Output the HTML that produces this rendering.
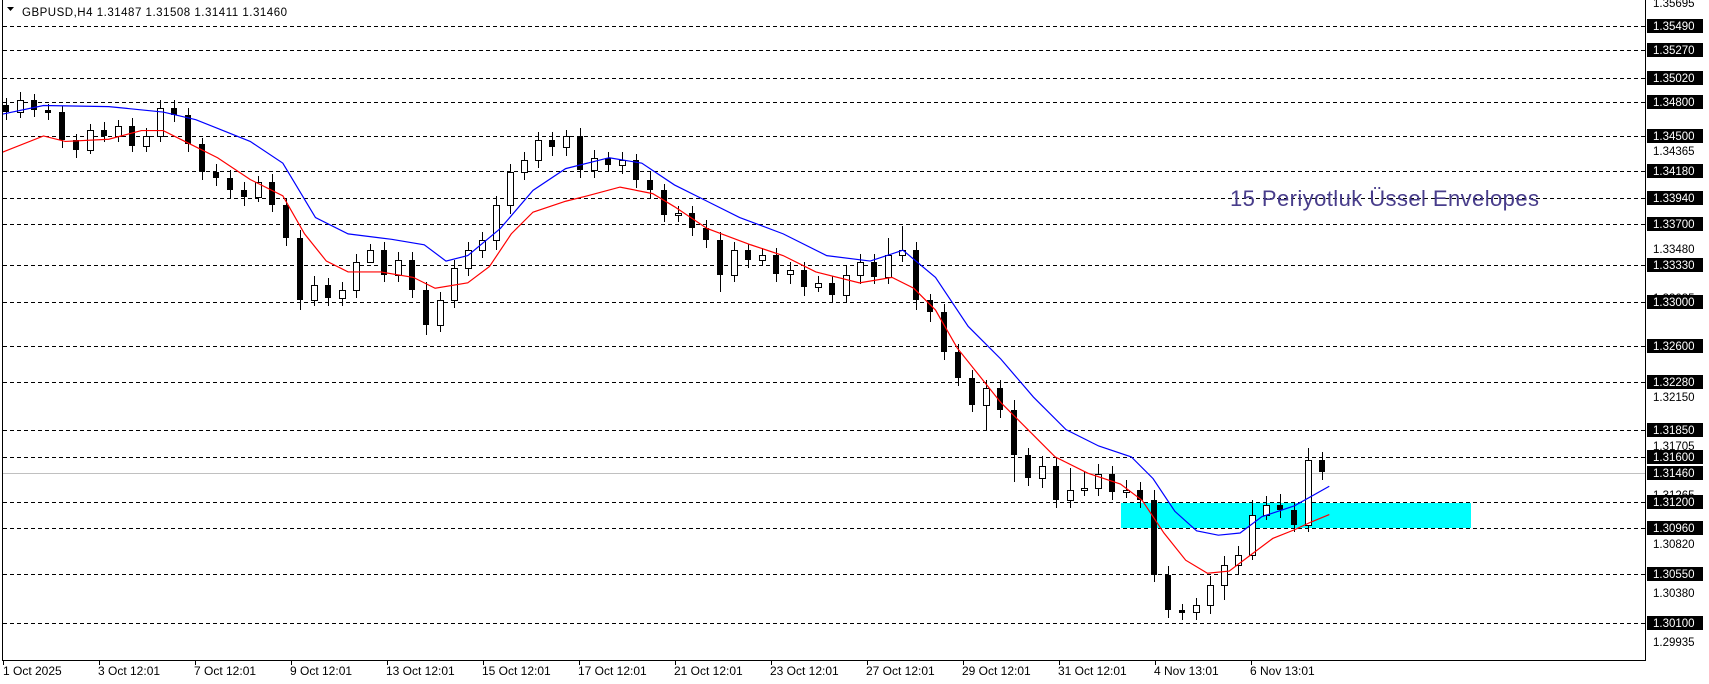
<!DOCTYPE html>
<html><head><meta charset="utf-8"><style>
html,body{margin:0;padding:0;background:#fff;width:1709px;height:684px;overflow:hidden}
svg{display:block}
text{font-family:"Liberation Sans",sans-serif;font-size:11.5px}
.b{fill:#000}
.w{fill:#fff;stroke:#000;stroke-width:1}
.g line{stroke:#000;stroke-dasharray:4,3}
.L rect{fill:#000}
.L text{fill:#fff}
.d text{font-size:12px}
</style></head><body>
<svg width="1709" height="684" viewBox="0 0 1709 684" xmlns="http://www.w3.org/2000/svg">
<rect width="1709" height="684" fill="#fff"/>
<g class="g">
<line x1="3" y1="26.5" x2="1645" y2="26.5"/>
<line x1="3" y1="50.5" x2="1645" y2="50.5"/>
<line x1="3" y1="78.5" x2="1645" y2="78.5"/>
<line x1="3" y1="102.5" x2="1645" y2="102.5"/>
<line x1="3" y1="136.5" x2="1645" y2="136.5"/>
<line x1="3" y1="171.5" x2="1645" y2="171.5"/>
<line x1="3" y1="198.5" x2="1645" y2="198.5"/>
<line x1="3" y1="224.5" x2="1645" y2="224.5"/>
<line x1="3" y1="265.5" x2="1645" y2="265.5"/>
<line x1="3" y1="302.5" x2="1645" y2="302.5"/>
<line x1="3" y1="346.5" x2="1645" y2="346.5"/>
<line x1="3" y1="382.5" x2="1645" y2="382.5"/>
<line x1="3" y1="430.5" x2="1645" y2="430.5"/>
<line x1="3" y1="457.5" x2="1645" y2="457.5"/>
<line x1="3" y1="502.5" x2="1645" y2="502.5"/>
<line x1="3" y1="528.5" x2="1645" y2="528.5"/>
<line x1="3" y1="574.5" x2="1645" y2="574.5"/>
<line x1="3" y1="623.5" x2="1645" y2="623.5"/>
</g>
<line x1="3" y1="473.5" x2="1645" y2="473.5" stroke="#c0c0c0"/>
<rect x="1121" y="503" width="350" height="25" fill="#00ffff"/>
<text x="1230" y="206" style="font-size:22px" fill="#483d8b" textLength="309">15 Periyotluk Üssel Envelopes</text>

<path stroke="#000" fill="none" d="M6.5 98V120 M20.5 92V118 M34.5 94V117 M48.5 104V120 M62.5 106V148 M76.5 134V158 M90.5 124V154 M104.5 122V142 M118.5 120V142 M132.5 118V152 M146.5 128V152 M160.5 100V142 M174.5 100V122 M188.5 108V152 M202.5 138V180 M216.5 164V186 M230.5 170V198 M244.5 182V206 M258.5 176V202 M272.5 174V212 M286.5 198V246 M300.5 230V310 M314.5 276V306 M328.5 278V306 M342.5 282V306 M356.5 254V298 M370.5 244V262 M384.5 242V282 M398.5 252V282 M412.5 252V298 M426.5 282V335 M440.5 292V332 M454.5 260V308 M468.5 242V276 M482.5 232V258 M496.5 196V250 M510.5 164V214 M524.5 152V180 M538.5 132V168 M552.5 132V156 M566.5 130V156 M580.5 128V178 M594.5 150V178 M608.5 152V172 M622.5 152V174 M636.5 154V188 M650.5 172V198 M664.5 184V222 M678.5 206V222 M692.5 206V236 M706.5 220V248 M720.5 232V292 M734.5 242V282 M748.5 244V268 M762.5 248V266 M776.5 248V282 M790.5 262V284 M804.5 262V296 M818.5 276V292 M832.5 276V302 M846.5 266V302 M860.5 254V284 M874.5 254V284 M888.5 238V284 M902.5 226V262 M916.5 242V310 M930.5 294V322 M944.5 304V360 M958.5 344V386 M972.5 370V412 M986.5 380V430 M1000.5 380V418 M1014.5 400V482 M1028.5 448V486 M1042.5 456V488 M1056.5 458V508 M1070.5 468V508 M1084.5 472V496 M1098.5 464V496 M1112.5 466V500 M1126.5 480V498 M1140.5 482V508 M1154.5 490V582 M1168.5 566V618 M1182.5 604V620 M1196.5 598V620 M1210.5 576V614 M1224.5 556V600 M1238.5 546V574 M1252.5 500V560 M1266.5 496V520 M1280.5 494V518 M1294.5 502V532 M1308.5 448V532 M1322.5 452V480"/>

<g>
<rect class="b" x="3" y="105" width="6" height="7"/>
<rect class="w" x="17.5" y="100.5" width="6" height="12"/>
<rect class="b" x="31" y="100" width="6" height="10"/>
<rect class="b" x="45" y="110" width="6" height="3"/>
<rect class="b" x="59" y="112" width="6" height="28"/>
<rect class="b" x="73" y="140" width="6" height="10"/>
<rect class="w" x="87.5" y="130.5" width="6" height="20"/>
<rect class="b" x="101" y="130" width="6" height="6"/>
<rect class="w" x="115.5" y="126.5" width="6" height="10"/>
<rect class="b" x="129" y="126" width="6" height="20"/>
<rect class="w" x="143.5" y="136.5" width="6" height="10"/>
<rect class="w" x="157.5" y="108.5" width="6" height="28"/>
<rect class="b" x="171" y="108" width="6" height="7"/>
<rect class="b" x="185" y="115" width="6" height="29"/>
<rect class="b" x="199" y="144" width="6" height="28"/>
<rect class="b" x="213" y="172" width="6" height="6"/>
<rect class="b" x="227" y="178" width="6" height="12"/>
<rect class="b" x="241" y="190" width="6" height="7"/>
<rect class="w" x="255.5" y="182.5" width="6" height="15"/>
<rect class="b" x="269" y="182" width="6" height="23"/>
<rect class="b" x="283" y="205" width="6" height="33"/>
<rect class="b" x="297" y="238" width="6" height="62"/>
<rect class="w" x="311.5" y="285.5" width="6" height="15"/>
<rect class="b" x="325" y="285" width="6" height="13"/>
<rect class="w" x="339.5" y="290.5" width="6" height="8"/>
<rect class="w" x="353.5" y="262.5" width="6" height="28"/>
<rect class="w" x="367.5" y="250.5" width="6" height="12"/>
<rect class="b" x="381" y="250" width="6" height="25"/>
<rect class="w" x="395.5" y="260.5" width="6" height="15"/>
<rect class="b" x="409" y="260" width="6" height="30"/>
<rect class="b" x="423" y="290" width="6" height="35"/>
<rect class="w" x="437.5" y="300.5" width="6" height="25"/>
<rect class="w" x="451.5" y="268.5" width="6" height="32"/>
<rect class="w" x="465.5" y="250.5" width="6" height="18"/>
<rect class="w" x="479.5" y="240.5" width="6" height="10"/>
<rect class="w" x="493.5" y="205.5" width="6" height="35"/>
<rect class="w" x="507.5" y="172.5" width="6" height="33"/>
<rect class="w" x="521.5" y="160.5" width="6" height="12"/>
<rect class="w" x="535.5" y="140.5" width="6" height="20"/>
<rect class="b" x="549" y="140" width="6" height="7"/>
<rect class="w" x="563.5" y="136.5" width="6" height="11"/>
<rect class="b" x="577" y="136" width="6" height="34"/>
<rect class="w" x="591.5" y="158.5" width="6" height="12"/>
<rect class="b" x="605" y="158" width="6" height="7"/>
<rect class="w" x="619.5" y="160.5" width="6" height="5"/>
<rect class="b" x="633" y="160" width="6" height="20"/>
<rect class="b" x="647" y="180" width="6" height="10"/>
<rect class="b" x="661" y="190" width="6" height="25"/>
<rect class="w" x="675.5" y="213.5" width="6" height="2"/>
<rect class="b" x="689" y="213" width="6" height="15"/>
<rect class="b" x="703" y="228" width="6" height="12"/>
<rect class="b" x="717" y="240" width="6" height="35"/>
<rect class="w" x="731.5" y="250.5" width="6" height="25"/>
<rect class="b" x="745" y="250" width="6" height="10"/>
<rect class="w" x="759.5" y="255.5" width="6" height="5"/>
<rect class="b" x="773" y="255" width="6" height="19"/>
<rect class="w" x="787.5" y="270.5" width="6" height="4"/>
<rect class="b" x="801" y="270" width="6" height="17"/>
<rect class="w" x="815.5" y="283.5" width="6" height="4"/>
<rect class="b" x="829" y="283" width="6" height="12"/>
<rect class="w" x="843.5" y="275.5" width="6" height="20"/>
<rect class="w" x="857.5" y="262.5" width="6" height="13"/>
<rect class="b" x="871" y="262" width="6" height="15"/>
<rect class="w" x="885.5" y="255.5" width="6" height="22"/>
<rect class="w" x="899.5" y="250.5" width="6" height="5"/>
<rect class="b" x="913" y="250" width="6" height="50"/>
<rect class="b" x="927" y="300" width="6" height="12"/>
<rect class="b" x="941" y="312" width="6" height="40"/>
<rect class="b" x="955" y="352" width="6" height="26"/>
<rect class="b" x="969" y="378" width="6" height="27"/>
<rect class="w" x="983.5" y="388.5" width="6" height="17"/>
<rect class="b" x="997" y="388" width="6" height="22"/>
<rect class="b" x="1011" y="410" width="6" height="45"/>
<rect class="b" x="1025" y="455" width="6" height="23"/>
<rect class="w" x="1039.5" y="466.5" width="6" height="12"/>
<rect class="b" x="1053" y="466" width="6" height="34"/>
<rect class="w" x="1067.5" y="490.5" width="6" height="10"/>
<rect class="w" x="1081.5" y="488.5" width="6" height="2"/>
<rect class="w" x="1095.5" y="474.5" width="6" height="14"/>
<rect class="b" x="1109" y="474" width="6" height="18"/>
<rect class="w" x="1123.5" y="490.5" width="6" height="2"/>
<rect class="b" x="1137" y="490" width="6" height="10"/>
<rect class="b" x="1151" y="500" width="6" height="75"/>
<rect class="b" x="1165" y="575" width="6" height="35"/>
<rect class="b" x="1179" y="610" width="6" height="3"/>
<rect class="w" x="1193.5" y="605.5" width="6" height="7"/>
<rect class="w" x="1207.5" y="585.5" width="6" height="20"/>
<rect class="w" x="1221.5" y="565.5" width="6" height="20"/>
<rect class="w" x="1235.5" y="555.5" width="6" height="10"/>
<rect class="w" x="1249.5" y="515.5" width="6" height="40"/>
<rect class="w" x="1263.5" y="505.5" width="6" height="10"/>
<rect class="b" x="1277" y="505" width="6" height="5"/>
<rect class="b" x="1291" y="510" width="6" height="15"/>
<rect class="w" x="1305.5" y="460.5" width="6" height="65"/>
<rect class="b" x="1319" y="460" width="6" height="12"/>
</g>

<g transform="scale(1.0878)" fill="none" stroke-width="1.1">
<polyline stroke="#0000ff" points="2,105 40,97 100,98 150,103 180,110 230,130 260,150 290,200 320,215 360,220 390,225 410,240 430,235 460,210 490,175 520,155 560,145 590,150 620,170 650,185 680,200 720,215 760,235 800,240 830,230 860,255 890,300 920,330 950,365 980,395 1010,410 1040,420 1060,440 1080,470 1100,488 1120,492 1140,490 1160,475 1190,465 1222,447"/>
<polyline stroke="#ff0000" points="2,140 40,125 60,130 100,128 130,120 150,120 170,130 200,145 230,165 260,180 280,215 300,240 320,250 350,250 380,255 400,265 430,260 450,245 470,215 490,195 520,185 540,180 570,172 600,178 620,190 650,210 690,225 720,235 750,250 790,260 820,255 840,265 860,285 880,320 900,345 920,370 945,395 970,420 1000,435 1030,445 1050,460 1070,490 1090,515 1110,527 1130,525 1150,510 1170,495 1190,487 1205,480 1222,473"/>
</g>

<line x1="2.5" y1="0" x2="2.5" y2="660" stroke="#000"/>
<line x1="1645.5" y1="0" x2="1645.5" y2="661" stroke="#000"/>
<line x1="2" y1="660.5" x2="1646" y2="660.5" stroke="#000"/>

<path d="M7 7 L14 7 L10.5 11 Z" fill="#000"/>
<text x="22" y="16" fill="#000" textLength="265">GBPUSD,H4  1.31487 1.31508 1.31411 1.31460</text>

<g fill="#000">
<text x="1653" y="7">1.35695</text>
<text x="1653" y="155">1.34365</text>
<text x="1653" y="253">1.33480</text>
<text x="1653" y="302">1.33035</text>
<text x="1653" y="401">1.32150</text>
<text x="1653" y="450">1.31705</text>
<text x="1653" y="499">1.31265</text>
<text x="1653" y="548">1.30820</text>
<text x="1653" y="597">1.30380</text>
<text x="1653" y="646">1.29935</text>
</g>
<g class="L">
<rect x="1647" y="19" width="56" height="14"/><text x="1653" y="30">1.35490</text>
<rect x="1647" y="43" width="56" height="14"/><text x="1653" y="54">1.35270</text>
<rect x="1647" y="71" width="56" height="14"/><text x="1653" y="82">1.35020</text>
<rect x="1647" y="95" width="56" height="14"/><text x="1653" y="106">1.34800</text>
<rect x="1647" y="129" width="56" height="14"/><text x="1653" y="140">1.34500</text>
<rect x="1647" y="164" width="56" height="14"/><text x="1653" y="175">1.34180</text>
<rect x="1647" y="191" width="56" height="14"/><text x="1653" y="202">1.33940</text>
<rect x="1647" y="217" width="56" height="14"/><text x="1653" y="228">1.33700</text>
<rect x="1647" y="258" width="56" height="14"/><text x="1653" y="269">1.33330</text>
<rect x="1647" y="295" width="56" height="14"/><text x="1653" y="306">1.33000</text>
<rect x="1647" y="339" width="56" height="14"/><text x="1653" y="350">1.32600</text>
<rect x="1647" y="375" width="56" height="14"/><text x="1653" y="386">1.32280</text>
<rect x="1647" y="423" width="56" height="14"/><text x="1653" y="434">1.31850</text>
<rect x="1647" y="450" width="56" height="14"/><text x="1653" y="461">1.31600</text>
<rect x="1647" y="466" width="56" height="14"/><text x="1653" y="477">1.31460</text>
<rect x="1647" y="495" width="56" height="14"/><text x="1653" y="506">1.31200</text>
<rect x="1647" y="521" width="56" height="14"/><text x="1653" y="532">1.30960</text>
<rect x="1647" y="567" width="56" height="14"/><text x="1653" y="578">1.30550</text>
<rect x="1647" y="616" width="56" height="14"/><text x="1653" y="627">1.30100</text>
</g>

<path stroke="#000" d="M3.5 661V665 M99.5 661V665 M195.5 661V665 M291.5 661V665 M387.5 661V665 M483.5 661V665 M579.5 661V665 M675.5 661V665 M771.5 661V665 M867.5 661V665 M963.5 661V665 M1059.5 661V665 M1155.5 661V665 M1251.5 661V665"/>
<g fill="#000" class="d">
<text x="3" y="675">1 Oct 2025</text>
<text x="98" y="675">3 Oct 12:01</text>
<text x="194" y="675">7 Oct 12:01</text>
<text x="290" y="675">9 Oct 12:01</text>
<text x="386" y="675">13 Oct 12:01</text>
<text x="482" y="675">15 Oct 12:01</text>
<text x="578" y="675">17 Oct 12:01</text>
<text x="674" y="675">21 Oct 12:01</text>
<text x="770" y="675">23 Oct 12:01</text>
<text x="866" y="675">27 Oct 12:01</text>
<text x="962" y="675">29 Oct 12:01</text>
<text x="1058" y="675">31 Oct 12:01</text>
<text x="1154" y="675">4 Nov 13:01</text>
<text x="1250" y="675">6 Nov 13:01</text>
</g>
</svg>
</body></html>
